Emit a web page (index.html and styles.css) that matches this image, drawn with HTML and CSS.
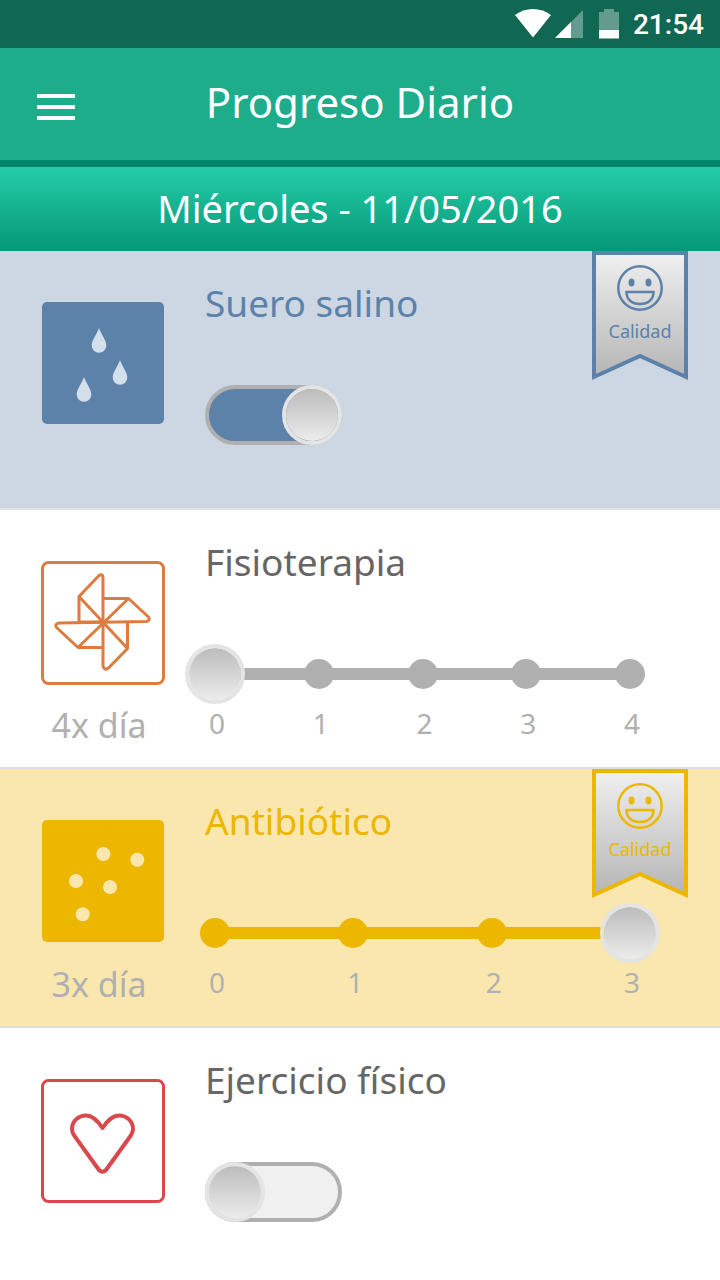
FILE: index.html
```html
<!DOCTYPE html>
<html lang="es">
<head>
<meta charset="utf-8">
<meta name="viewport" content="width=device-width, initial-scale=1">
<title>Progreso Diario</title>
<link rel="stylesheet" href="styles.css">
</head>
<body>
<div class="status">
  <svg class="status-icons" width="104" height="30" viewBox="0 0 104 30" aria-hidden="true">
    <path fill="#fff" d="M0 6Q8 0 18 0T36 6L18 28.500Z"/>
    <path fill="#fff" fill-opacity=".35" d="M68 1V29H40Z"/>
    <path fill="#fff" d="M56 13V29H40Z"/>
    <path fill="#fff" fill-opacity=".35" d="M89 0H99V3H104V21H84V3H89Z"/>
    <path fill="#fff" d="M84 21H104V29.500H84Z"/>
  </svg>
  <time class="clock">21:54</time>
</div>
<header class="appbar">
  <button class="menu" type="button" aria-label="Menú"><span class="bar"></span><span class="bar"></span><span class="bar"></span></button>
  <h1 class="title">Progreso Diario</h1>
</header>
<div class="date">Miércoles - 11/05/2016</div>
<main class="list">
  <section class="row row-blue">
    <div class="side">
      <svg class="icon" viewBox="0 0 124 124" aria-hidden="true">
        <rect x="1" y="0" width="122" height="122" rx="5" fill="#5c82aa"/>
        <g fill="#d3dfeb">
          <path d="M58 26C60 32 65.300 38 65.300 43.500A7.300 7.300 0 0 1 50.700 43.500C50.700 38 56 32 58 26Z"/>
          <path d="M79 58C81 64 86.300 70 86.300 75.500A7.300 7.300 0 0 1 71.700 75.500C71.700 70 77 64 79 58Z"/>
          <path d="M43 75C45 81 50.300 87 50.300 92.500A7.300 7.300 0 0 1 35.700 92.500C35.700 87 41 81 43 75Z"/>
        </g>
      </svg>
    </div>
    <div class="body">
      <h2 class="name"><label for="suero">Suero salino</label></h2>
      <input class="switch" id="suero" type="checkbox" role="switch" checked>
    </div>
    <button class="ribbon" type="button">
      <svg class="ribbon-art" viewBox="0 0 96 130" aria-hidden="true">
        <defs><linearGradient id="g1" x1="0" y1="0" x2="0" y2="1"><stop offset="0" stop-color="#f0f0f0"/><stop offset="1" stop-color="#b5b5b5"/></linearGradient></defs>
        <path d="M2 2H94V126L48 105L2 126Z" fill="url(#g1)" stroke="currentColor" stroke-width="4"/>
        <g fill="none" stroke="currentColor" stroke-width="2.500">
          <circle cx="48" cy="37" r="21.700"/>
          <path d="M34.500 41H61.500C61.500 49 55.500 53 48 53S34.500 49 34.500 41Z"/>
        </g>
        <g fill="currentColor"><ellipse cx="39.500" cy="31.500" rx="3" ry="4"/><ellipse cx="56.500" cy="31.500" rx="3" ry="4"/></g>
      </svg>
      <span class="ribbon-text">Calidad</span>
    </button>
  </section>
  <section class="row">
    <div class="side">
      <svg class="icon" viewBox="0 0 124 124" fill="none" stroke="#de7b3e" stroke-width="3" stroke-linejoin="round" aria-hidden="true">
        <rect x="1.500" y="1.500" width="121" height="121" rx="6"/>
        <path d="M62 61V17Q61.500 12 58 14.500L38 35.500V61"/>
        <path d="M62 37.500H87.500L107.500 56Q109.500 59.500 105.500 60.500L18 62Q13 63 15.500 66.500L37 86.500H62"/>
        <path d="M62 61V105Q63.500 110 67.500 107L86.500 87.500V62"/>
        <path d="M38 61H62M38 35.500L86.500 87.500M87.500 37.500L37 86.500"/>
      </svg>
      <span class="dose">4x día</span>
    </div>
    <div class="body">
      <h2 class="name"><label for="fisio">Fisioterapia</label></h2>
      <div class="slider">
        <div class="stops"><span class="stop"></span><span class="stop"></span><span class="stop"></span><span class="stop"></span><span class="stop"></span></div>
        <input class="range" id="fisio" type="range" min="0" max="4" value="0">
      </div>
      <div class="scale"><span class="mark">0</span><span class="mark">1</span><span class="mark">2</span><span class="mark">3</span><span class="mark">4</span></div>
    </div>
  </section>
  <section class="row row-yellow">
    <div class="side">
      <svg class="icon" viewBox="0 0 124 124" aria-hidden="true">
        <rect x="1" y="0" width="122" height="122" rx="5" fill="#edb700"/>
        <g fill="#f9e7ae"><circle cx="62.300" cy="34" r="7"/><circle cx="96.300" cy="39.700" r="7"/><circle cx="35" cy="61" r="7"/><circle cx="69" cy="67" r="7"/><circle cx="41.700" cy="94.300" r="7"/></g>
      </svg>
      <span class="dose">3x día</span>
    </div>
    <div class="body">
      <h2 class="name"><label for="anti">Antibiótico</label></h2>
      <div class="slider">
        <div class="stops"><span class="stop"></span><span class="stop"></span><span class="stop"></span><span class="stop"></span></div>
        <input class="range" id="anti" type="range" min="0" max="3" value="3">
      </div>
      <div class="scale"><span class="mark">0</span><span class="mark">1</span><span class="mark">2</span><span class="mark">3</span></div>
    </div>
    <button class="ribbon" type="button">
      <svg class="ribbon-art" viewBox="0 0 96 130" aria-hidden="true">
        <path d="M2 2H94V126L48 105L2 126Z" fill="url(#g1)" stroke="currentColor" stroke-width="4"/>
        <g fill="none" stroke="currentColor" stroke-width="2.500">
          <circle cx="48" cy="37" r="21.700"/>
          <path d="M34.500 41H61.500C61.500 49 55.500 53 48 53S34.500 49 34.500 41Z"/>
        </g>
        <g fill="currentColor"><ellipse cx="39.500" cy="31.500" rx="3" ry="4"/><ellipse cx="56.500" cy="31.500" rx="3" ry="4"/></g>
      </svg>
      <span class="ribbon-text">Calidad</span>
    </button>
  </section>
  <section class="row">
    <div class="side">
      <svg class="icon" viewBox="0 0 124 124" fill="none" stroke="#d9484c" stroke-linejoin="round" aria-hidden="true">
        <rect x="1.500" y="1.500" width="121" height="121" rx="6" stroke-width="3"/>
        <path stroke-width="4" d="M61.500 49C57 42 52 36.500 45 36.500C37 36.500 31 42.500 31 50C31 53 32 55 33.500 57L58 91Q61.500 94.500 65 91L89.500 57C91 55 92 53 92 50C92 42.500 86 36.500 78 36.500C71 36.500 66 42 61.500 49Z"/>
      </svg>
    </div>
    <div class="body">
      <h2 class="name"><label for="ejercicio">Ejercicio físico</label></h2>
      <input class="switch" id="ejercicio" type="checkbox" role="switch">
    </div>
  </section>
</main>
</body>
</html>
```

FILE: styles.css
```css
*,
*::before {
  box-sizing: border-box;
}

body {
  margin: 0;
  min-height: 100vh;
  display: flex;
  flex-direction: column;
  background: #fff;
  color: #666;
  font-family: "Noto Sans", "Open Sans", sans-serif;
}

button {
  padding: 0;
  border: 0;
  background: none;
  font: inherit;
  cursor: pointer;
}

.status {
  height: 48px;
  padding: 0 16px;
  display: flex;
  align-items: center;
  justify-content: flex-end;
  gap: 14px;
  background: #106752;
}

.clock {
  padding-top: 2px;
  color: #fff;
  font: 500 28px/32px Roboto, sans-serif;
}

.appbar {
  min-height: 112px;
  padding: 0 37px;
  display: grid;
  grid-template-columns: 1fr auto 1fr;
  align-items: center;
  background: #1dad8a;
}

.menu {
  width: 38px;
  padding-top: 6px;
  display: flex;
  flex-direction: column;
  gap: 7px;
}

.bar {
  width: 100%;
  height: 4px;
  background: #fff;
}

.title {
  margin: 0;
  padding-bottom: 4px;
  color: #fff;
  font-size: 42px;
  font-weight: 400;
  line-height: 56px;
}

.date {
  border-top: 7px solid #00846a;
  padding: 15px 16px 17px;
  background: linear-gradient(#26cca8, #049877) padding-box;
  color: #fff;
  font-size: 38px;
  line-height: 52px;
  text-align: center;
}

.list {
  flex: 1;
  display: flex;
  flex-direction: column;
}

.row {
  --accent: #b0b0b0;
  position: relative;
  min-height: 259px;
  padding: 28px 60px 0 41px;
  display: grid;
  grid-template-columns: 124px 1fr;
  column-gap: 40px;
  align-items: start;
  border-bottom: 2px solid #dfdfdf;
}

.row:last-child {
  flex: 1;
  min-height: 0;
  padding-bottom: 24px;
  border-bottom: 0;
}

.row-blue {
  --accent: #5c82aa;
  background: #ccd7e3;
  color: var(--accent);
}

.row-yellow {
  --accent: #edb700;
  background: #f9e7ae;
  color: var(--accent);
}

.side {
  padding-top: 23px;
  display: flex;
  flex-direction: column;
  gap: 20px;
}

.icon {
  display: block;
  width: 100%;
}

.dose {
  padding-right: 8px;
  color: #b0b0b0;
  font-size: 34px;
  line-height: 40px;
  text-align: center;
}

.name {
  margin: 0 0 58px;
  font-size: 37px;
  font-weight: 400;
  line-height: 48px;
}

.switch {
  appearance: none;
  display: flex;
  width: 137px;
  height: 60px;
  margin: 0;
  border: 4px solid #b0b0b0;
  border-radius: 30px;
  background: #f0f0f0;
}

.switch:checked {
  justify-content: flex-end;
  background: #5c82aa;
}

.switch::before {
  content: "";
  flex: none;
  width: 60px;
  height: 60px;
  margin: -4px;
  border: 4px solid #e4e4e4;
  border-radius: 50%;
  background: linear-gradient(#bcbcbc, #ececec) padding-box;
}

.slider {
  margin-left: -20px;
  display: grid;
  align-items: center;
}

.stops,
.range {
  grid-area: 1 / 1;
}

.stops {
  padding: 0 15px;
  display: flex;
  justify-content: space-between;
}

.stop {
  width: 30px;
  height: 30px;
  border-radius: 50%;
  background: var(--accent);
}

.range {
  appearance: none;
  width: 100%;
  height: 60px;
  margin: 0;
  background: linear-gradient(var(--accent), var(--accent)) center / calc(100% - 60px) 12px no-repeat;
}

.range::-webkit-slider-thumb {
  appearance: none;
  width: 60px;
  height: 60px;
  border: 4px solid #e4e4e4;
  border-radius: 50%;
  background: linear-gradient(#bcbcbc, #ececec) padding-box;
}

.scale {
  margin: 0 13px 0 -3px;
  display: flex;
  justify-content: space-between;
  color: #b0b0b0;
  font-size: 28px;
  line-height: 38px;
}

.mark {
  width: 30px;
  text-align: center;
}

.ribbon {
  position: absolute;
  top: 0;
  right: 32px;
  width: 96px;
  display: grid;
  color: var(--accent);
}

.ribbon-art,
.ribbon-text {
  grid-area: 1 / 1;
}

.ribbon-text {
  padding-top: 68px;
  font-size: 18px;
  line-height: 24px;
}
```
